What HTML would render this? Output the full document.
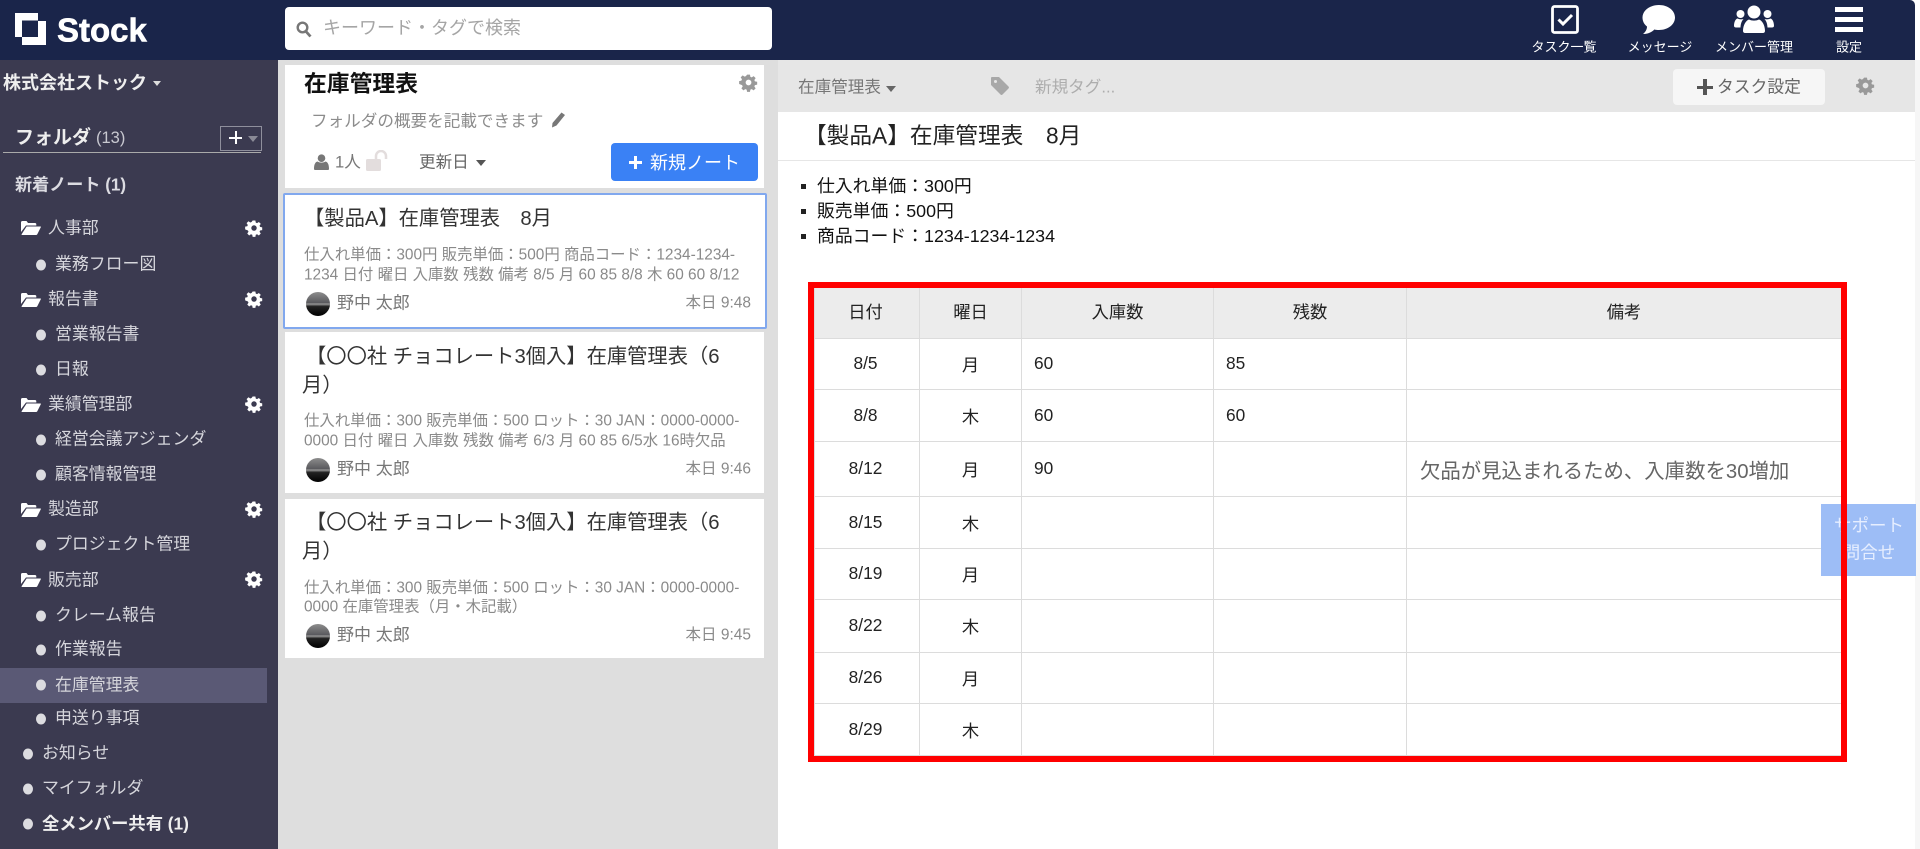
<!DOCTYPE html>
<html lang="ja"><head><meta charset="utf-8"><title>Stock</title>
<style>
html,body{margin:0;padding:0;background:#fff;}
body{width:1920px;height:849px;overflow:hidden;position:relative;font-family:"Liberation Sans","Noto Sans CJK JP",sans-serif;}
.b{position:absolute;}
.t{position:absolute;white-space:nowrap;line-height:1;transform:translateY(-50%);}
.c{transform:translate(-50%,-50%);}
.r{transform:translate(-100%,-50%);}
.s{font-size:16.9px;color:#d6d6dc;}
.dot{position:absolute;width:10px;height:11px;border-radius:50%;background:#dcdce0;transform:translateY(-50%);}
.g{position:absolute;fill:#fff;}
.pv{font-size:15.4px;color:#8a8a8a;}
.ct{font-size:20.3px;color:#333;}
.nm{font-size:17px;color:#777;}
.tm{font-size:15.5px;color:#8a8a8a;}
.av{position:absolute;width:24px;height:24px;border-radius:50%;background:linear-gradient(#8d8d8d 0%,#5a5a5e 45%,#9a9a9a 50%,#222 60%,#000 100%);transform:translateY(-50%);}
.nav{font-size:13px;color:#fff;}
table{position:absolute;left:814px;top:287px;border-collapse:collapse;table-layout:fixed;width:1027px;font-size:17.3px;color:#222;}
td,th{border:1px solid #dcdcdc;padding:0 0 1px 0;font-weight:400;text-align:center;}
th{background:#ececec;height:45px;padding-bottom:5px;}
tr>:first-child{padding-right:3px;}
td.l{text-align:left;padding-left:12px;}
</style></head><body>
<svg width="0" height="0" style="position:absolute"><defs>
<symbol id="gear" viewBox="0 0 24 24"><path fill-rule="evenodd" d="M10 1h4l.6 3.1 1.9.8 2.6-1.8 2.8 2.8-1.8 2.6.8 1.9 3.1.6v4l-3.1.6-.8 1.9 1.8 2.6-2.8 2.8-2.6-1.8-1.9.8-.6 3.1h-4l-.6-3.1-1.9-.8-2.6 1.8-2.8-2.8 1.8-2.6-.8-1.9L-1 14v-4l3.1-.6.8-1.9-1.8-2.6 2.8-2.8 2.6 1.8 1.9-.8zM12 8a4 4 0 1 0 0 8 4 4 0 0 0 0-8z" transform="translate(1.1 1.1) scale(.91)"/></symbol>
<symbol id="folder" viewBox="0 0 20 16"><path d="M0 2.500C0 1.400.7 1 1.500 1h4l1.500 2h7c.8 0 1.300.5 1.300 1.200V5.500H5L0 12z"/><path d="M5.600 6.500H19.500c.5 0 .5.500.3.800l-3.500 7c-.2.400-.6.700-1.100.700H1.200c-.6 0-.8-.5-.5-.9z"/></symbol>
</defs></svg>

<!-- backgrounds -->
<div class="b" style="left:1915px;top:0;width:5px;height:849px;background:#fff"></div>
<div class="b" style="left:0;top:0;width:1915px;height:60px;background:#1a254a;border-top-right-radius:5px"></div>
<div class="b" style="left:0;top:60px;width:278px;height:789px;background:#3b3a50"></div>
<div class="b" style="left:278px;top:60px;width:500px;height:789px;background:#dedede"></div>
<div class="b" style="left:778px;top:60px;width:1137px;height:52px;background:#e6e6e6"></div>
<div class="b" style="left:1915px;top:60px;width:5px;height:789px;background:#f6f6f6"></div>

<!-- header -->
<svg class="b" style="left:15px;top:13px" width="31" height="32" viewBox="0 0 31 32"><path fill="#fff" fill-rule="evenodd" d="M0 0H23V8H31V32H7V24H0zM7 7.500V24H23V7.500z"/></svg>
<div class="t" style="left:57px;top:30px;font-size:33px;font-weight:700;color:#fff;font-family:'Liberation Sans',sans-serif;-webkit-text-stroke:.6px #fff">Stock</div>
<div class="b" style="left:285px;top:7px;width:487px;height:43px;background:#fff;border-radius:4px"></div>
<svg class="b" style="left:296px;top:21px" width="16" height="17" viewBox="0 0 16 17"><circle cx="6.500" cy="6.500" r="4.800" fill="none" stroke="#777" stroke-width="2.400"/><path d="M10 10.500l4.500 5" stroke="#777" stroke-width="2.800"/></svg>
<div class="t" style="left:323px;top:28px;font-size:18px;color:#a5a5a5">キーワード・タグで検索</div>

<svg class="b" style="left:1551px;top:5px" width="28" height="29" viewBox="0 0 28 29"><rect x="1.500" y="1.500" width="25" height="26" rx="2" fill="none" stroke="#fff" stroke-width="2.800"/><path d="M7.500 14.500l4.500 4.500 9-9" fill="none" stroke="#fff" stroke-width="3"/></svg>
<div class="t c nav" style="left:1564px;top:47px">タスク一覧</div>
<svg class="b" style="left:1642px;top:5px" width="34" height="30" viewBox="0 0 34 30"><path fill="#fff" d="M17 0c9 0 16 5.500 16 12.500S26 25 17 25c-1.800 0-3.300-.2-4.700-.5C10 27 6 29 1 29c2.500-2 4-4.500 4-7.500C2 19.300.5 16 .5 12.500.5 5.500 8 0 17 0z"/></svg>
<div class="t c nav" style="left:1660px;top:47px">メッセージ</div>
<svg class="b" style="left:1734px;top:5px" width="40" height="30" viewBox="0 0 40 30"><g fill="#fff"><circle cx="20" cy="7" r="6.500"/><circle cx="6.500" cy="9" r="4"/><circle cx="33.500" cy="9" r="4"/><path d="M11 28c-1 0-2-.8-2-2 0-6 3-10.500 6-11.500 3 1.500 7 1.500 10 0 3 1 6 5.500 6 11.500 0 1.200-1 2-2 2z"/><path d="M0 21c0-4 1.500-7 3.500-7.500 2 1 4 1 6 .5-1.800 2-2.800 4.500-3 8.500H2c-1 0-2-.5-2-1.500zM40 21c0-4-1.500-7-3.500-7.500-2 1-4 1-6 .5 1.800 2 2.800 4.500 3 8.500H38c1 0 2-.5 2-1.500z"/></g></svg>
<div class="t c nav" style="left:1754px;top:47px">メンバー管理</div>
<div class="b" style="left:1835px;top:7px;width:28px;height:4.500px;background:#fff"></div>
<div class="b" style="left:1835px;top:17px;width:28px;height:4.500px;background:#fff"></div>
<div class="b" style="left:1835px;top:27px;width:28px;height:4.500px;background:#fff"></div>
<div class="t c nav" style="left:1849px;top:47px">設定</div>

<!-- sidebar -->
<div class="t" style="left:3px;top:83px;font-size:18px;font-weight:700;color:#eee">株式会社ストック</div>
<div class="b" style="left:153px;top:81px;border:4px solid transparent;border-top:5px solid #ddd;border-bottom:0"></div>
<div class="t" style="left:15px;top:138px;font-size:19px;font-weight:700;color:#eee">フォルダ</div>
<div class="t" style="left:96px;top:138px;font-size:16.500px;color:#c8c8d0">(13)</div>
<div class="b" style="left:220px;top:126px;width:40px;height:23px;border:1px solid #8f8f9c"></div>
<div class="b" style="left:229px;top:136.500px;width:13px;height:2.500px;background:#fff"></div>
<div class="b" style="left:234.500px;top:131px;width:2.500px;height:13px;background:#fff"></div>
<div class="b" style="left:248px;top:136px;border:5px solid transparent;border-top:6px solid #8a8a96;border-bottom:0"></div>
<div class="b" style="left:3px;top:152px;width:258px;height:1px;background:#aaa;"></div>
<div class="t" style="left:15px;top:185px;font-size:17.100px;font-weight:700;color:#dcdce2">新着ノート (1)</div>

<svg class="g" style="left:21px;top:220px" width="20" height="16"><use href="#folder"/></svg>
<div class="t s" style="left:48px;top:229px">人事部</div>
<svg class="g" style="left:245px;top:219px" width="18" height="18"><use href="#gear"/></svg>
<div class="dot" style="left:36px;top:265px"></div><div class="t s" style="left:55px;top:265px">業務フロー図</div>

<svg class="g" style="left:21px;top:292px" width="20" height="16"><use href="#folder"/></svg>
<div class="t s" style="left:48px;top:300px">報告書</div>
<svg class="g" style="left:245px;top:290px" width="18" height="18"><use href="#gear"/></svg>
<div class="dot" style="left:36px;top:335px"></div><div class="t s" style="left:55px;top:335px">営業報告書</div>
<div class="dot" style="left:36px;top:370px"></div><div class="t s" style="left:55px;top:370px">日報</div>

<svg class="g" style="left:21px;top:397px" width="20" height="16"><use href="#folder"/></svg>
<div class="t s" style="left:48px;top:405px">業績管理部</div>
<svg class="g" style="left:245px;top:395px" width="18" height="18"><use href="#gear"/></svg>
<div class="dot" style="left:36px;top:440px"></div><div class="t s" style="left:55px;top:440px">経営会議アジェンダ</div>
<div class="dot" style="left:36px;top:475px"></div><div class="t s" style="left:55px;top:475px">顧客情報管理</div>

<svg class="g" style="left:21px;top:502px" width="20" height="16"><use href="#folder"/></svg>
<div class="t s" style="left:48px;top:510px">製造部</div>
<svg class="g" style="left:245px;top:500px" width="18" height="18"><use href="#gear"/></svg>
<div class="dot" style="left:36px;top:545px"></div><div class="t s" style="left:55px;top:545px">プロジェクト管理</div>

<svg class="g" style="left:21px;top:572px" width="20" height="16"><use href="#folder"/></svg>
<div class="t s" style="left:48px;top:581px">販売部</div>
<svg class="g" style="left:245px;top:570px" width="18" height="18"><use href="#gear"/></svg>
<div class="dot" style="left:36px;top:616px"></div><div class="t s" style="left:55px;top:616px">クレーム報告</div>
<div class="dot" style="left:36px;top:650px"></div><div class="t s" style="left:55px;top:650px">作業報告</div>
<div class="b" style="left:0;top:668px;width:267px;height:35px;background:#5a5975"></div>
<div class="dot" style="left:36px;top:685px"></div><div class="t s" style="left:55px;top:686px">在庫管理表</div>
<div class="dot" style="left:36px;top:719px"></div><div class="t s" style="left:55px;top:719px">申送り事項</div>
<div class="dot" style="left:23px;top:754px"></div><div class="t s" style="left:42px;top:754px">お知らせ</div>
<div class="dot" style="left:23px;top:789px"></div><div class="t s" style="left:42px;top:789px">マイフォルダ</div>
<div class="dot" style="left:23px;top:824px"></div><div class="t" style="left:42px;top:824px;font-size:17.300px;font-weight:700;color:#eee">全メンバー共有 (1)</div>

<!-- middle header -->
<div class="b" style="left:285px;top:65px;width:479px;height:123px;background:#fff"></div>
<div class="t" style="left:304px;top:84px;font-size:22.800px;font-weight:700;color:#111">在庫管理表</div>
<svg class="b" style="left:739px;top:73px;fill:#999" width="19" height="19"><use href="#gear"/></svg>
<div class="t" style="left:311px;top:122px;font-size:16.600px;color:#8c8c8c">フォルダの概要を記載できます</div>
<svg class="b" style="left:551px;top:112px" width="15" height="16" viewBox="0 0 15 16"><path fill="#777" d="M10.500.5l3.500 2.500-8.500 10.500L1 15.500l.5-4.500z"/></svg>
<svg class="b" style="left:314px;top:154px" width="15" height="16" viewBox="0 0 15 16"><circle cx="7.500" cy="4.200" r="3.800" fill="#777"/><path fill="#777" d="M0 15c0-5 1.500-7 3.500-7.500 2.500 1.500 5.500 1.500 8 0 2 .5 3.500 2.500 3.500 7.500 0 .6-.5 1-1 1H1c-.5 0-1-.4-1-1z"/></svg>
<div class="t" style="left:335px;top:163px;font-size:16.600px;color:#777">1人</div>
<svg class="b" style="left:366px;top:150px" width="24" height="21" viewBox="0 0 24 21"><rect x="0" y="9" width="15" height="12" rx="1.500" fill="#e3dddd"/><path d="M10 9V6a5 5 0 0 1 10 0v3" fill="none" stroke="#e3dddd" stroke-width="2.500"/></svg>
<div class="t" style="left:419px;top:163px;font-size:16.600px;color:#666">更新日</div>
<div class="b" style="left:476px;top:160px;border:5px solid transparent;border-top:6px solid #555;border-bottom:0"></div>
<div class="b" style="left:611px;top:143px;width:147px;height:38px;background:#3a81f5;border-radius:4px"></div>
<div class="b" style="left:629px;top:161px;width:13px;height:2.600px;background:#fff"></div>
<div class="b" style="left:634.200px;top:155.800px;width:2.600px;height:13px;background:#fff"></div>
<div class="t" style="left:650px;top:163px;font-size:18px;color:#fff">新規ノート</div>

<!-- cards -->
<div class="b" style="left:283px;top:193px;width:480px;height:132px;background:#fff;border:2px solid #81a8ee;border-radius:2px"></div>
<div class="t ct" style="left:304px;top:219px">【製品A】在庫管理表　8月</div>
<div class="t pv" style="left:304px;top:255px">仕入れ単価：300円 販売単価：500円 商品コード：1234-1234-</div>
<div class="t pv" style="left:304px;top:275px">1234 日付 曜日 入庫数 残数 備考 8/5 月 60 85 8/8 木 60 60 8/12</div>
<div class="av" style="left:306px;top:304px"></div>
<div class="t nm" style="left:337px;top:303px">野中 太郎</div>
<div class="t r tm" style="left:751px;top:303px">本日 9:48</div>

<div class="b" style="left:285px;top:332px;width:479px;height:161px;background:#fff"></div>
<div class="t ct" style="left:306px;top:357px">【〇〇社 チョコレート3個入】在庫管理表（6</div>
<div class="t ct" style="left:302px;top:386px">月）</div>
<div class="t pv" style="left:304px;top:421px">仕入れ単価：300 販売単価：500 ロット：30 JAN：0000-0000-</div>
<div class="t pv" style="left:304px;top:441px">0000 日付 曜日 入庫数 残数 備考 6/3 月 60 85 6/5水 16時欠品</div>
<div class="av" style="left:306px;top:470px"></div>
<div class="t nm" style="left:337px;top:469px">野中 太郎</div>
<div class="t r tm" style="left:751px;top:469px">本日 9:46</div>

<div class="b" style="left:285px;top:499px;width:479px;height:159px;background:#fff"></div>
<div class="t ct" style="left:306px;top:523px">【〇〇社 チョコレート3個入】在庫管理表（6</div>
<div class="t ct" style="left:302px;top:552px">月）</div>
<div class="t pv" style="left:304px;top:588px">仕入れ単価：300 販売単価：500 ロット：30 JAN：0000-0000-</div>
<div class="t pv" style="left:304px;top:607px">0000 在庫管理表（月・木記載）</div>
<div class="av" style="left:306px;top:636px"></div>
<div class="t nm" style="left:337px;top:635px">野中 太郎</div>
<div class="t r tm" style="left:751px;top:635px">本日 9:45</div>

<!-- right top bar -->
<div class="t" style="left:798px;top:88px;font-size:16.600px;color:#777">在庫管理表</div>
<div class="b" style="left:886px;top:86px;border:5px solid transparent;border-top:6px solid #666;border-bottom:0"></div>
<svg class="b" style="left:991px;top:77px" width="18" height="18" viewBox="0 0 18 18"><path fill="#a8a8a8" fill-rule="evenodd" d="M1 0h7l9.500 9.500c.6.600.6 1.400 0 2l-6 6c-.6.600-1.400.6-2 0L0 8V1c0-.6.400-1 1-1zM4.500 3a1.500 1.500 0 1 0 0 3 1.500 1.500 0 0 0 0-3z"/></svg>
<div class="t" style="left:1035px;top:88px;font-size:16.600px;color:#adadad">新規タグ...</div>
<div class="b" style="left:1673px;top:69px;width:152px;height:36px;background:#f6f6f6;border-radius:4px"></div>
<div class="b" style="left:1697px;top:85.500px;width:16px;height:3.500px;background:#555"></div>
<div class="b" style="left:1703.300px;top:79px;width:3.500px;height:16px;background:#555"></div>
<div class="t" style="left:1717px;top:88px;font-size:16.800px;color:#666">タスク設定</div>
<svg class="b" style="left:1856px;top:76px;fill:#999" width="19" height="19"><use href="#gear"/></svg>

<!-- note -->
<div class="t" style="left:804px;top:136px;font-size:22.700px;color:#222">【製品A】在庫管理表　8月</div>
<div class="b" style="left:778px;top:160px;width:1137px;height:1px;background:#e6e6e6"></div>
<div class="b" style="left:801px;top:184px;width:5px;height:5px;background:#222"></div>
<div class="t" style="left:817px;top:186.500px;font-size:17.850px;color:#111">仕入れ単価：300円</div>
<div class="b" style="left:801px;top:209px;width:5px;height:5px;background:#222"></div>
<div class="t" style="left:817px;top:211.500px;font-size:17.850px;color:#111">販売単価：500円</div>
<div class="b" style="left:801px;top:234px;width:5px;height:5px;background:#222"></div>
<div class="t" style="left:817px;top:236.500px;font-size:17.850px;color:#111">商品コード：1234-1234-1234</div>

<table>
<colgroup><col style="width:105px"><col style="width:102px"><col style="width:192px"><col style="width:193px"><col style="width:435px"></colgroup>
<tr><th>日付</th><th>曜日</th><th>入庫数</th><th>残数</th><th>備考</th></tr>
<tr style="height:51px"><td>8/5</td><td>月</td><td class="l">60</td><td class="l">85</td><td></td></tr>
<tr style="height:52px"><td>8/8</td><td>木</td><td class="l">60</td><td class="l">60</td><td></td></tr>
<tr style="height:55px"><td>8/12</td><td>月</td><td class="l">90</td><td></td><td class="l" style="font-size:20.400px;color:#666;padding-left:13px">欠品が見込まれるため、入庫数を30増加</td></tr>
<tr style="height:52px"><td>8/15</td><td>木</td><td></td><td></td><td></td></tr>
<tr style="height:51px"><td>8/19</td><td>月</td><td></td><td></td><td></td></tr>
<tr style="height:53px"><td>8/22</td><td>木</td><td></td><td></td><td></td></tr>
<tr style="height:51px"><td>8/26</td><td>月</td><td></td><td></td><td></td></tr>
<tr style="height:52px"><td>8/29</td><td>木</td><td></td><td></td><td></td></tr>
</table>

<!-- support -->
<div class="b" style="left:1821px;top:504px;width:95px;height:72px;background:#9dbdf6"></div>
<div class="t c" style="left:1869px;top:526px;font-size:17.500px;color:#e6eeff">サポート</div>
<div class="t c" style="left:1869px;top:553px;font-size:17.500px;color:#e6eeff">問合せ</div>

<!-- red frame -->
<div class="b" style="left:808px;top:282px;width:1027px;height:468px;border:6px solid #ff0000"></div>
</body></html>
